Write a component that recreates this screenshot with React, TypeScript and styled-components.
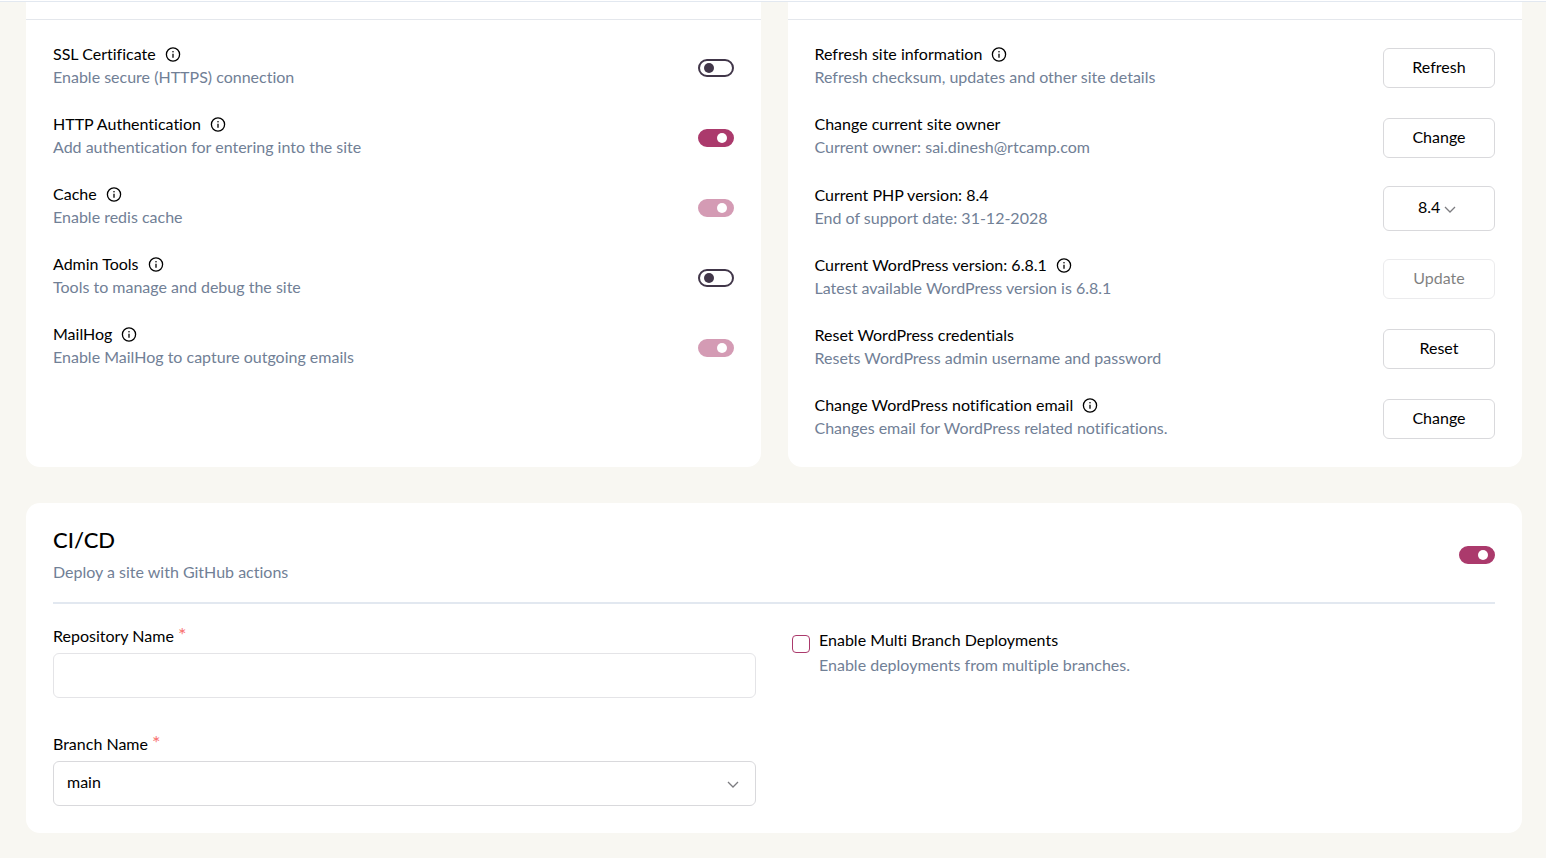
import React, { useId, useState } from "react";
import styled, { createGlobalStyle } from "styled-components";

const GlobalStyle = createGlobalStyle`
  *, *::before, *::after { box-sizing: border-box; }
  html { background: #f8f7f2; overflow-x: hidden; }
  body {
    margin: 0;
    background: #f8f7f2;
    color: #000000;
    font-family: Lato, "Open Sans", sans-serif;
    font-size: 16px;
    line-height: 23px;
    font-variant-ligatures: none;
  }
  button, input, select { font: inherit; color: inherit; margin: 0; }
`;

const TopBar = styled.header`
  height: 2px;
  background: #ffffff;
  border-bottom: 1px solid #e2e8f0;
`;

const Page = styled.main`
  padding: 0 24px 25px 26px;
  display: flex;
  flex-direction: column;
  gap: 36px;
`;

const Panels = styled.div`
  display: grid;
  grid-template-columns: 1fr 1fr;
  gap: 27px;
`;

const Card = styled.section`
  background: #ffffff;
  border-radius: 14px;
  padding: 23px 27px 27px;
`;

const Panel = styled(Card)`
  border-radius: 0 0 14px 14px;
  padding: 0;
`;

const PanelHead = styled.div`
  height: 18px;
  border-bottom: 1px solid #e4e7ec;
`;

const Rows = styled.div`
  display: flex;
  flex-direction: column;
  gap: 18px;
  padding: 22px 27px;
`;

const RowBox = styled.div<{ $tall?: boolean }>`
  display: flex;
  align-items: center;
  justify-content: space-between;
  min-height: ${(p) => (p.$tall ? 53 : 52)}px;
`;

const Texts = styled.div`
  padding-bottom: 6px;
`;

const Title = styled.div`
  display: flex;
  align-items: center;
  gap: 9px;
`;

const Note = styled.p`
  margin: 0;
  color: #718096;
`;

const InfoButton = styled.button`
  display: flex;
  padding: 0;
  border: 0;
  background: none;
`;

const ActionButton = styled.button`
  width: 112px;
  height: 40px;
  border: 1px solid #d9d9dc;
  border-radius: 6px;
  background: #ffffff;
  padding: 0 0 4px;

  &:disabled {
    opacity: 0.5;
  }
`;

const Switch = styled.input`
  appearance: none;
  display: flex;
  align-items: center;
  width: 36px;
  height: 18px;
  padding: 0 5px 0 4px;
  border: 2px solid #413649;
  border-radius: 9px;
  background: #ffffff;

  &::before {
    content: "";
    width: 10px;
    height: 10px;
    border-radius: 50%;
    background: #413649;
  }

  &:checked {
    justify-content: flex-end;
    border-color: #ab3a6c;
    background: #ab3a6c;
  }

  &:checked::before {
    background: #ffffff;
  }

  &:disabled {
    opacity: 0.5;
  }
`;

const SelectWrap = styled.div<{ $compact?: boolean }>`
  position: relative;
  width: ${(p) => (p.$compact ? "112px" : "100%")};

  svg {
    position: absolute;
    top: 50%;
    right: ${(p) => (p.$compact ? 39 : 17)}px;
    margin-top: -6px;
    pointer-events: none;
  }
`;

const Select = styled.select<{ $compact?: boolean }>`
  appearance: none;
  display: block;
  width: 100%;
  height: 45px;
  border: 1px solid #d9d9dc;
  border-radius: 6px;
  background: #ffffff;
  padding: ${(p) => (p.$compact ? "0 0 4px 34px" : "0 36px 4px 13px")};
`;

const CardHead = styled.div`
  display: flex;
  align-items: center;
  justify-content: space-between;
  padding-bottom: 19px;
  border-bottom: 2px solid #e2e8f0;
`;

const Heading = styled.h2`
  margin: 0 0 6px;
  font-size: 22px;
  line-height: 28px;
  font-weight: 500;
`;

const Form = styled.form`
  display: grid;
  grid-template-columns: 1fr 1fr;
  gap: 36px;
  padding-top: 20px;
`;

const Fields = styled.div`
  display: flex;
  flex-direction: column;
  gap: 34px;
`;

const Field = styled.div`
  display: flex;
  flex-direction: column;
  gap: 6px;
`;

const Required = styled.span`
  color: #f87171;
  font-size: 20px;
  line-height: 0;
`;

const TextInput = styled.input`
  width: 100%;
  height: 45px;
  border: 1px solid #e4e4e7;
  border-radius: 6px;
  padding: 0 13px;
  background: #ffffff;
`;

const CheckRow = styled.div`
  display: flex;
  align-items: flex-start;
  gap: 9px;
  padding-top: 4px;
`;

const Checkbox = styled.input`
  appearance: none;
  width: 18px;
  height: 18px;
  margin-top: 7px;
  border: 1px solid #ab3a6c;
  border-radius: 4px;
  background: #ffffff;

  &:checked {
    background: #ab3a6c;
  }
`;

const CheckText = styled.div`
  display: flex;
  flex-direction: column;
  gap: 2px;
`;

const InfoIcon = () => (
  <svg width="16" height="16" viewBox="0 0 16 16" fill="none" aria-hidden="true">
    <circle cx="8" cy="8.5" r="6.6" stroke="#000000" strokeWidth="1.3" />
    <path d="M8 7.7v4" stroke="#000000" strokeWidth="1.3" />
    <circle cx="8" cy="5.7" r="0.8" fill="#000000" />
  </svg>
);

const Chevron = () => (
  <svg width="12" height="12" viewBox="0 0 12 12" fill="none" aria-hidden="true">
    <path d="M1 4l5 5 5-5" stroke="#7c7c80" strokeWidth="1.3" />
  </svg>
);

type SettingProps = {
  title: string;
  note: string;
  info?: boolean;
  tall?: boolean;
  controlId?: string;
  children: React.ReactNode;
};

function Setting({ title, note, info, tall, controlId, children }: SettingProps) {
  return (
    <RowBox $tall={tall}>
      <Texts>
        <Title>
          {controlId ? <label htmlFor={controlId}>{title}</label> : <span>{title}</span>}
          {info && (
            <InfoButton type="button" aria-label={`About ${title}`}>
              <InfoIcon />
            </InfoButton>
          )}
        </Title>
        <Note>{note}</Note>
      </Texts>
      {children}
    </RowBox>
  );
}

type ToggleProps = { title: string; note: string; on?: boolean; locked?: boolean };

function ToggleSetting({ title, note, on = false, locked }: ToggleProps) {
  const id = useId();
  const [checked, setChecked] = useState(on);
  return (
    <Setting title={title} note={note} info controlId={id}>
      <Switch
        id={id}
        type="checkbox"
        role="switch"
        checked={checked}
        disabled={locked}
        onChange={(e) => setChecked(e.target.checked)}
      />
    </Setting>
  );
}

const toggles: ToggleProps[] = [
  { title: "SSL Certificate", note: "Enable secure (HTTPS) connection" },
  { title: "HTTP Authentication", note: "Add authentication for entering into the site", on: true },
  { title: "Cache", note: "Enable redis cache", on: true, locked: true },
  { title: "Admin Tools", note: "Tools to manage and debug the site" },
  { title: "MailHog", note: "Enable MailHog to capture outgoing emails", on: true, locked: true },
];

export default function App() {
  return (
    <>
      <GlobalStyle />
      <TopBar />
      <Page>
        <Panels>
          <Panel>
            <PanelHead />
            <Rows>
              {toggles.map((t) => (
                <ToggleSetting key={t.title} {...t} />
              ))}
            </Rows>
          </Panel>
          <Panel>
            <PanelHead />
            <Rows>
              <Setting title="Refresh site information" note="Refresh checksum, updates and other site details" info>
                <ActionButton type="button">Refresh</ActionButton>
              </Setting>
              <Setting title="Change current site owner" note="Current owner: sai.dinesh@rtcamp.com">
                <ActionButton type="button">Change</ActionButton>
              </Setting>
              <Setting title="Current PHP version: 8.4" note="End of support date: 31-12-2028" tall controlId="php">
                <SelectWrap $compact>
                  <Select id="php" $compact defaultValue="8.4">
                    <option>8.4</option>
                  </Select>
                  <Chevron />
                </SelectWrap>
              </Setting>
              <Setting title="Current WordPress version: 6.8.1" note="Latest available WordPress version is 6.8.1" info>
                <ActionButton type="button" disabled>Update</ActionButton>
              </Setting>
              <Setting title="Reset WordPress credentials" note="Resets WordPress admin username and password">
                <ActionButton type="button">Reset</ActionButton>
              </Setting>
              <Setting title="Change WordPress notification email" note="Changes email for WordPress related notifications." info>
                <ActionButton type="button">Change</ActionButton>
              </Setting>
            </Rows>
          </Panel>
        </Panels>
        <Card>
          <CardHead>
            <div>
              <Heading>CI/CD</Heading>
              <Note>Deploy a site with GitHub actions</Note>
            </div>
            <Switch type="checkbox" role="switch" aria-label="CI/CD" defaultChecked />
          </CardHead>
          <Form>
            <Fields>
              <Field>
                <label htmlFor="repo">Repository Name <Required>*</Required></label>
                <TextInput id="repo" type="text" required />
              </Field>
              <Field>
                <label htmlFor="branch">Branch Name <Required>*</Required></label>
                <SelectWrap>
                  <Select id="branch" defaultValue="main">
                    <option>main</option>
                  </Select>
                  <Chevron />
                </SelectWrap>
              </Field>
            </Fields>
            <CheckRow>
              <Checkbox id="multi" type="checkbox" />
              <CheckText>
                <label htmlFor="multi">Enable Multi Branch Deployments</label>
                <Note>Enable deployments from multiple branches.</Note>
              </CheckText>
            </CheckRow>
          </Form>
        </Card>
      </Page>
    </>
  );
}
